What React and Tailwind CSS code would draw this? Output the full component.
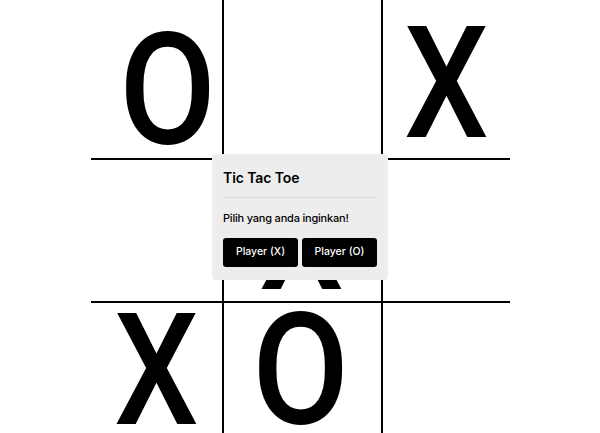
export default function App() {
  const gx = "block font-['Roboto',sans-serif] font-medium text-[156px] leading-[120px] text-black scale-x-[0.86]";
  const go = "block font-['Roboto',sans-serif] font-medium text-[156px] leading-[120px] text-black scale-x-[0.9]";
  return (
    <div className="relative w-[600px] h-[433px] overflow-hidden bg-white">
      <div className="mx-auto w-[419px] grid grid-cols-[133px_159px_127px] grid-rows-[160px_143px_143px]">
        <div className="border-r-2 border-b-2 border-black flex justify-center items-start pt-[30px] pl-[24px]">
          <span className={go}>O</span>
        </div>
        <div className="border-r-2 border-b-2 border-black"></div>
        <div className="border-b-2 border-black flex justify-center items-start pt-[24px]">
          <span className={gx}>X</span>
        </div>
        <div className="border-r-2 border-b-2 border-black"></div>
        <div className="border-r-2 border-b-2 border-black flex justify-center items-start pt-[16px] pr-[2px]">
          <span className={gx}>X</span>
        </div>
        <div className="border-b-2 border-black"></div>
        <div className="border-r-2 border-black flex justify-center items-start pt-[8px] pl-[1px]">
          <span className={gx}>X</span>
        </div>
        <div className="border-r-2 border-black flex justify-center items-start pt-[7px] pr-[2px]">
          <span className={go}>O</span>
        </div>
        <div></div>
      </div>

      <div className="absolute inset-0 flex items-center justify-center">
        <div className="w-[176px] rounded-[4px] bg-[#ededed] px-[11px] pt-[13px] pb-[13px] font-['Inter',sans-serif] text-black">
          <div className="text-[14px] font-semibold leading-[22px] tracking-[-0.1px]">Tic Tac Toe</div>
          <div className="mt-[8px] h-px bg-[#dcdcdc]"></div>
          <div className="mt-[12px] text-[11px] font-medium leading-[16px] tracking-[-0.2px]">Pilih yang anda inginkan!</div>
          <div className="mt-[12px] flex gap-[4px]">
            <button className="h-[29px] w-[75px] rounded-[3px] bg-black text-white text-[10.5px] font-medium">Player (X)</button>
            <button className="h-[29px] w-[75px] rounded-[3px] bg-black text-white text-[10.5px] font-medium">Player (O)</button>
          </div>
        </div>
      </div>
    </div>
  );
}
